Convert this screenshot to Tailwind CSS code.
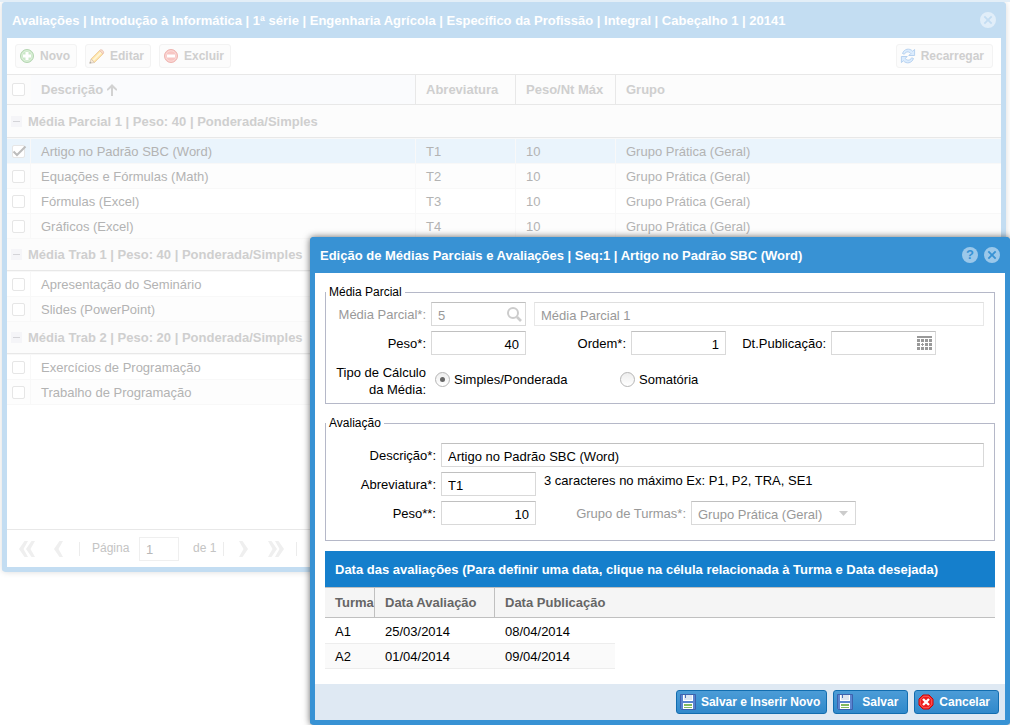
<!DOCTYPE html>
<html lang="pt-BR">
<head>
<meta charset="utf-8">
<meta name="viewport" content="width=device-width, initial-scale=1">
<title>Avaliações</title>
<script src="https://cdn.jsdelivr.net/npm/@tailwindcss/browser@4"></script>
</head>
<body class="bg-white text-[13px] leading-[17px] text-black font-['Liberation_Sans',Arial,sans-serif]">
<svg class="hidden" aria-hidden="true">
  <symbol id="close" viewBox="0 0 16 16"><path fill-rule="evenodd" fill="currentColor" d="M8 0a8 8 0 1 0 0 16A8 8 0 0 0 8 0ZM5 3.700 8 6.700l3-3 1.300 1.300-3 3 3 3-1.300 1.300-3-3-3 3L3.700 11l3-3-3-3Z"/></symbol>
  <symbol id="minus" viewBox="0 0 11 11"><path fill="#f5f5f8" d="M0 0h11v11H0z"/><path fill="#d4d4d8" d="M2 5h7v1H2z"/></symbol>
  <symbol id="tick" viewBox="0 0 15 13"><path fill="none" stroke="#bdbdbd" stroke-width="2" d="M1.500 6.500 5 10l8.500-8.500"/></symbol>
  <symbol id="chev" viewBox="0 0 9 16"><path fill="currentColor" d="M9 0H5.500L0 8l5.500 8H9L4.500 8z"/></symbol>
  <symbol id="disk" viewBox="0 0 16 16">
    <path fill="#5b84cf" stroke="#3c62ad" d="M.5.5h15v15h-14l-1-1z"/><path fill="#fff" d="M3 1h10v6H3z"/><path fill="#dbe4f0" d="M4 1h8v5H4z"/><path fill="#4a6fb5" d="M5 1h1v3H5z"/>
    <path fill="#fff" d="M3 9h10v6H3z"/><path fill="#83b95f" d="M4 10h8v2H4zm0 3h8v1H4z"/>
  </symbol>
</svg>

<main class="relative min-h-screen overflow-hidden border-t-2 border-[#e3eef7]">

  <!-- Lista de avaliações (desabilitada pela janela modal) -->
  <section class="absolute top-0 left-0.5 right-1 rounded-[4px] border-[5px] border-t-0 border-[#c3ddf2] bg-white shadow-[0_0_6px_rgba(0,0,0,0.15)]">
    <header class="-mx-[5px] flex h-9 items-center justify-between rounded-t-[4px] bg-[#c3ddf2] pl-2.5 pr-2.5 text-white">
      <h1 class="font-bold whitespace-nowrap">Avaliações | Introdução à Informática | 1ª série | Engenharia Agrícola | Específico da Profissão | Integral | Cabeçalho 1 | 20141</h1>
      <button type="button" aria-label="Fechar" class="size-4 text-[#e1eef9]"><svg class="size-4"><use href="#close"/></svg></button>
    </header>

    <div class="flex h-9 items-center gap-2 px-2 text-[#cfcfcf]">
      <button type="button" class="flex h-6 items-center gap-[5px] rounded-[3px] border border-[#f3f3f3] bg-[#fcfcfc] pr-1.5 pl-[3px] text-[12px] font-bold">
        <svg class="size-4" viewBox="0 0 16 16"><circle cx="8" cy="8" r="6.500" fill="#cbe8c8" stroke="#b5d6b2"/><circle cx="8" cy="8" r="5.200" fill="none" stroke="#dff1dc"/><path fill="#fff" d="M6.500 4h3v2.500H12v3H9.500V12h-3V9.500H4v-3h2.500z"/></svg>Novo</button>
      <button type="button" class="flex h-6 items-center gap-[5px] rounded-[3px] border border-[#f3f3f3] bg-[#fcfcfc] pr-1.5 pl-[3px] text-[12px] font-bold">
        <svg class="size-4" viewBox="0 0 16 16"><path fill="#fde3a4" stroke="#ecc99a" stroke-width=".8" d="M2 11 10.500 2.500l3.500 3.500-8.500 8.500z"/><path fill="#fff4d4" d="m3.500 11.500 8-8 1.500 1.500-8 8z"/><path fill="#f9dcc9" stroke="#e9bfae" stroke-width=".8" d="M10.500 2.500C12 .2 16.300 3.500 14 6z"/><path fill="#f7ead9" stroke="#d8c8b4" stroke-width=".8" d="M.8 15.200 2 11l3.500 3.500z"/><path fill="#aaa" d="m.5 15.500.6-2 1.400 1.400z"/></svg>Editar</button>
      <button type="button" class="flex h-6 items-center gap-[5px] rounded-[3px] border border-[#f3f3f3] bg-[#fcfcfc] pr-1.5 pl-[3px] text-[12px] font-bold">
        <svg class="size-4" viewBox="0 0 16 16"><circle cx="8" cy="8" r="6.500" fill="#f8c6c3" stroke="#eeb5b1"/><circle cx="8" cy="8" r="5.200" fill="none" stroke="#fbdad8"/><path fill="#fff" d="M4 6.500h8v3H4z"/></svg>Excluir</button>
      <button type="button" class="ml-auto flex h-6 items-center gap-[5px] rounded-[3px] border border-[#f3f3f3] bg-[#fcfcfc] pr-2 pl-[3px] text-[12px] font-bold">
        <svg class="size-4" viewBox="0 0 16 16"><g fill="#dcecfd" stroke="#a9c9ec" stroke-width=".8" stroke-linejoin="round"><path id="seta" d="M2.500 5.500C4 .8 9.500-.3 12.600 3.200L14.600 1.500V7.500H8.800l2-2C9 3.300 6 3.200 4.300 6.200z"/><use href="#seta" transform="rotate(180 8 8)"/></g></svg>Recarregar</button>
    </div>

    <table class="w-full table-fixed border-separate border-spacing-0 text-left text-[#b3b3b3] [&_td]:border-b [&_td]:border-r [&_td]:border-[#f8f8f8] [&_td]:px-2.5 [&_td]:py-0 [&_td:first-child]:pl-[5px] [&_td:first-child]:pr-0 [&_td:last-child]:border-r-0">
      <colgroup><col class="w-6"><col class="w-[385px]"><col class="w-[100px]"><col class="w-[100px]"><col></colgroup>
      <thead class="text-[#cfcfcf] [&_th]:h-[31px] [&_th]:border-y [&_th]:border-[#e8e8e8] [&_th]:bg-[#fcfcfc] [&_th]:px-2.5 [&_th]:py-0 [&_th]:whitespace-nowrap">
        <tr>
          <th class="pl-[5px]! pr-0!"><input type="checkbox" aria-label="Selecionar todas" class="block size-[13px] appearance-none rounded-[2px] border border-[#e6e6e6] bg-white"></th>
          <th class="border-r bg-[#fafbfd]!"><span class="flex items-center gap-1">Descrição <svg class="h-3 w-2.5" viewBox="0 0 10 12"><path fill="#d2d2d2" d="M5 0 0 5v1.500h1L4 4v8h2V4l3 2.500h1V5z"/></svg></span></th>
          <th class="border-r">Abreviatura</th>
          <th class="border-r">Peso/Nt Máx</th>
          <th>Grupo</th>
        </tr>
      </thead>
      <tbody>
        <tr><th colspan="5" class="h-[33px] border-b border-[#e8e8e8] bg-[#fcfcfc] py-0 pl-1 text-[#cfcfcf]"><button type="button" class="flex items-center gap-1.5 font-bold"><svg class="size-[11px]"><use href="#minus"/></svg>Média Parcial 1 | Peso: 40 | Ponderada/Simples</button></th></tr>
        <tr class="h-[26px] bg-[#eaf4fc] [&>td]:border-t"><td><span class="relative block"><input type="checkbox" checked aria-label="Artigo no Padrão SBC (Word)" class="block size-[13px] appearance-none rounded-[2px] border border-[#e6e6e6] bg-white"><svg class="pointer-events-none absolute top-0 left-0 h-[13px] w-[15px]"><use href="#tick"/></svg></span></td><td>Artigo no Padrão SBC (Word)</td><td>T1</td><td>10</td><td>Grupo Prática (Geral)</td></tr>
        <tr class="h-[25px] bg-[#fdfdfd]"><td><input type="checkbox" aria-label="Equações e Fórmulas (Math)" class="block size-[13px] appearance-none rounded-[2px] border border-[#e6e6e6] bg-white"></td><td>Equações e Fórmulas (Math)</td><td>T2</td><td>10</td><td>Grupo Prática (Geral)</td></tr>
        <tr class="h-[25px]"><td><input type="checkbox" aria-label="Fórmulas (Excel)" class="block size-[13px] appearance-none rounded-[2px] border border-[#e6e6e6] bg-white"></td><td>Fórmulas (Excel)</td><td>T3</td><td>10</td><td>Grupo Prática (Geral)</td></tr>
        <tr class="h-[25px] bg-[#fdfdfd]"><td><input type="checkbox" aria-label="Gráficos (Excel)" class="block size-[13px] appearance-none rounded-[2px] border border-[#e6e6e6] bg-white"></td><td>Gráficos (Excel)</td><td>T4</td><td>10</td><td>Grupo Prática (Geral)</td></tr>
        <tr><th colspan="5" class="h-8 border-b border-[#e8e8e8] bg-[#fcfcfc] py-0 pl-1 text-[#cfcfcf]"><button type="button" class="flex items-center gap-1.5 font-bold"><svg class="size-[11px]"><use href="#minus"/></svg>Média Trab 1 | Peso: 40 | Ponderada/Simples</button></th></tr>
        <tr class="h-[26px] [&>td]:border-t"><td><input type="checkbox" aria-label="Apresentação do Seminário" class="block size-[13px] appearance-none rounded-[2px] border border-[#e6e6e6] bg-white"></td><td>Apresentação do Seminário</td><td></td><td></td><td></td></tr>
        <tr class="h-[25px] bg-[#fdfdfd]"><td><input type="checkbox" aria-label="Slides (PowerPoint)" class="block size-[13px] appearance-none rounded-[2px] border border-[#e6e6e6] bg-white"></td><td>Slides (PowerPoint)</td><td></td><td></td><td></td></tr>
        <tr><th colspan="5" class="h-8 border-b border-[#e8e8e8] bg-[#fcfcfc] py-0 pl-1 text-[#cfcfcf]"><button type="button" class="flex items-center gap-1.5 font-bold"><svg class="size-[11px]"><use href="#minus"/></svg>Média Trab 2 | Peso: 20 | Ponderada/Simples</button></th></tr>
        <tr class="h-[26px] [&>td]:border-t"><td><input type="checkbox" aria-label="Exercícios de Programação" class="block size-[13px] appearance-none rounded-[2px] border border-[#e6e6e6] bg-white"></td><td>Exercícios de Programação</td><td></td><td></td><td></td></tr>
        <tr class="h-[25px] bg-[#fdfdfd]"><td><input type="checkbox" aria-label="Trabalho de Programação" class="block size-[13px] appearance-none rounded-[2px] border border-[#e6e6e6] bg-white"></td><td>Trabalho de Programação</td><td></td><td></td><td></td></tr>
      </tbody>
    </table>

    <nav aria-label="Paginação" class="mt-[124px] flex h-[38px] items-center border-t border-[#e8e8e8] pl-3 text-[12px] text-[#c4c4c4]">
      <button type="button" aria-label="Primeira página" class="flex text-[#efefef]"><svg class="h-4 w-[9px]"><use href="#chev"/></svg><svg class="-ml-0.5 h-4 w-[9px]"><use href="#chev"/></svg></button>
      <button type="button" aria-label="Página anterior" class="ml-[19px] text-[#efefef]"><svg class="h-4 w-[9px]"><use href="#chev"/></svg></button>
      <span class="ml-4 h-3.5 w-px bg-[#ececec]"></span>
      <label for="pagina" class="ml-3 w-[47px]">Página</label>
      <input id="pagina" type="text" value="1" class="h-6 w-10 border border-[#efefef] bg-white px-1.5 pt-0.5 text-[13px] text-[#b8b8b8]">
      <span class="ml-3.5 w-[30px]">de 1</span>
      <span class="h-3.5 w-px bg-[#ececec]"></span>
      <button type="button" aria-label="Próxima página" class="ml-[15px] rotate-180 text-[#efefef]"><svg class="h-4 w-[9px]"><use href="#chev"/></svg></button>
      <button type="button" aria-label="Última página" class="ml-5 flex rotate-180 text-[#efefef]"><svg class="h-4 w-[9px]"><use href="#chev"/></svg><svg class="-ml-0.5 h-4 w-[9px]"><use href="#chev"/></svg></button>
      <span class="ml-3 h-3.5 w-px bg-[#ececec]"></span>
    </nav>
  </section>

  <!-- Janela de edição -->
  <section role="dialog" aria-labelledby="titulo" class="absolute top-[235px] right-0 left-[310px] rounded-[4px] border-[5px] border-t-0 border-[#3892d4] bg-white shadow-[0_0_7px_rgba(0,0,0,0.6)]">
    <header class="-mx-[5px] flex h-9 items-center rounded-t-[4px] bg-[#3892d4] px-2.5 text-white">
      <h2 id="titulo" class="mr-auto font-bold whitespace-nowrap">Edição de Médias Parciais e Avaliações | Seq:1 | Artigo no Padrão SBC (Word)</h2>
      <button type="button" aria-label="Ajuda" class="mr-1.5 flex size-4 items-center justify-center rounded-full bg-[#9bc8ea] text-[13px] leading-4 font-bold text-[#3892d4]">?</button>
      <button type="button" aria-label="Fechar" class="size-4 text-[#9bc8ea]"><svg class="size-4"><use href="#close"/></svg></button>
    </header>

    <form id="edicao" class="px-2.5 pt-[11px] pb-[15px]">
      <fieldset class="border border-[#b5b8c8] pb-[5px]">
        <legend class="px-[3px] text-[12px] leading-4">Média Parcial</legend>
        <div class="mt-0.5 flex pr-2.5">
          <label for="mp" class="w-[105px] shrink-0 pt-1 pr-[5px] text-right text-[#999]">Média Parcial*:</label>
          <div class="relative w-[95px] shrink-0">
            <input id="mp" type="text" value="5" disabled class="h-6 w-full border border-[#d9d9d9] border-t-[#c0c0c0] bg-white px-1.5 pt-0.5 text-[#999]">
            <svg class="absolute top-1 right-1 size-4" viewBox="0 0 16 16" fill="none" stroke="#ccc"><circle cx="7" cy="7" r="5" stroke-width="2"/><path stroke-width="2.600" d="m11 11 4 4"/></svg>
          </div>
          <input type="text" value="Média Parcial 1" disabled aria-label="Nome da média parcial" class="ml-2 h-6 min-w-0 flex-1 border border-[#e8e8e8] border-t-[#dfdfdf] bg-white px-1.5 pt-0.5 text-[#999]">
        </div>
        <div class="mt-[5px] flex">
          <label for="peso" class="w-[105px] pt-1 pr-[5px] text-right">Peso*:</label>
          <input id="peso" type="text" value="40" class="h-6 w-[95px] border border-[#d9d9d9] border-t-[#c0c0c0] bg-white px-1.5 pt-0.5 text-right">
          <label for="ordem" class="w-[105px] pt-1 pr-[5px] text-right">Ordem*:</label>
          <input id="ordem" type="text" value="1" class="h-6 w-[95px] border border-[#d9d9d9] border-t-[#c0c0c0] bg-white px-1.5 pt-0.5 text-right">
          <label for="dt" class="w-[105px] pt-1 pr-[5px] text-right">Dt.Publicação:</label>
          <div class="relative w-[105px]">
            <input id="dt" type="text" class="h-6 w-full border border-[#d9d9d9] border-t-[#c0c0c0] bg-white px-1.5">
            <svg class="absolute top-[5px] right-1 h-3.5 w-[15px]" viewBox="0 0 15 14" fill="#999"><path d="M0 0h15v2H0zM0 3h3v3H0zm4 0h3v3H4zm4 0h3v3H8zm4 0h3v3h-3zM0 7h3v3H0zm8 0h3v3H8zm4 0h3v3h-3zM0 11h3v3H0zm4 0h3v3H4zm4 0h3v3H8zm4 0h3v3h-3zM5 7h1v1h1v1H6v1H5V9H4V8h1z"/></svg>
          </div>
        </div>
        <div role="radiogroup" aria-labelledby="tipo" class="mt-[9px] flex items-start">
          <span id="tipo" class="w-[105px] pr-[5px] text-right">Tipo de Cálculo<br>da Média:</span>
          <label class="mt-[7px] ml-1 flex w-[185px] items-center gap-1"><input type="radio" name="calc" checked class="flex size-[15px] appearance-none items-center justify-center rounded-full border border-[#b5b5b5] bg-linear-to-b from-[#eee] to-white before:size-[5px] before:rounded-full before:bg-[#666]">Simples/Ponderada</label>
          <label class="mt-[7px] flex items-center gap-1"><input type="radio" name="calc" class="size-[15px] appearance-none rounded-full border border-[#b5b5b5] bg-linear-to-b from-[#eee] to-white">Somatória</label>
        </div>
      </fieldset>

      <fieldset class="mt-[11px] border border-[#b5b8c8] pb-[15px]">
        <legend class="px-[3px] text-[12px] leading-4">Avaliação</legend>
        <div class="mt-3 flex pr-2.5">
          <label for="desc" class="w-[115px] shrink-0 pt-1 pr-[5px] text-right">Descrição*:</label>
          <input id="desc" type="text" value="Artigo no Padrão SBC (Word)" class="h-6 min-w-0 flex-1 border border-[#d9d9d9] border-t-[#c0c0c0] bg-white px-1.5 pt-0.5">
        </div>
        <div class="mt-[5px] flex">
          <label for="abrev" class="w-[115px] pt-1 pr-[5px] text-right">Abreviatura*:</label>
          <input id="abrev" type="text" value="T1" class="h-6 w-[95px] border border-[#d9d9d9] border-t-[#c0c0c0] bg-white px-1.5 pt-0.5">
          <span class="ml-2">3 caracteres no máximo Ex: P1, P2, TRA, SE1</span>
        </div>
        <div class="mt-[5px] flex">
          <label for="peso2" class="w-[115px] pt-1 pr-[5px] text-right">Peso**:</label>
          <input id="peso2" type="text" value="10" class="h-6 w-[95px] border border-[#d9d9d9] border-t-[#c0c0c0] bg-white px-1.5 pt-0.5 text-right">
          <label for="grupo" class="w-[155px] pt-1 pr-[5px] text-right text-[#999]">Grupo de Turmas*:</label>
          <div class="relative w-[165px]">
            <select id="grupo" disabled class="h-6 w-full appearance-none border border-[#d9d9d9] border-t-[#c0c0c0] bg-white px-1.5 pt-0.5 text-[#999] opacity-100"><option>Grupo Prática (Geral)</option></select>
            <svg class="pointer-events-none absolute top-2.5 right-2 h-[5px] w-[9px]" viewBox="0 0 9 5"><path fill="#ccc" d="M0 0h9L4.500 5z"/></svg>
          </div>
        </div>
      </fieldset>

      <h3 class="mt-2.5 flex h-9 items-center bg-[#157fcc] px-2.5 font-bold whitespace-nowrap text-white">Data das avaliações (Para definir uma data, clique na célula relacionada à Turma e Data desejada)</h3>
      <table class="w-full table-fixed border-separate border-spacing-0 text-left [&_td]:border-b [&_td]:border-[#ededed] [&_td]:px-2.5 [&_td]:py-0 [&_td:last-child]:border-0">
        <colgroup><col class="w-[50px]"><col class="w-[120px]"><col class="w-[120px]"><col></colgroup>
        <thead class="text-[#666] [&_th]:h-[31px] [&_th]:border-y [&_th]:border-[#c0c0c0] [&_th]:bg-[#f5f5f5] [&_th]:py-0 [&_th]:pl-2.5 [&_th]:whitespace-nowrap">
          <tr><th class="overflow-hidden border-r">Turma</th><th class="border-r">Data Avaliação</th><th>Data Publicação</th><th></th></tr>
        </thead>
        <tbody>
          <tr class="h-[26px] [&>td]:border-t [&>td]:border-t-white"><td>A1</td><td>25/03/2014</td><td>08/04/2014</td><td></td></tr>
          <tr class="h-[25px] [&_td:not(:last-child)]:bg-[#fafafa]"><td>A2</td><td>01/04/2014</td><td>09/04/2014</td><td></td></tr>
        </tbody>
      </table>
    </form>

    <footer class="flex h-9 items-center justify-end gap-1.5 bg-[#dfe9f3] px-1.5 text-[12px] font-bold text-white">
      <button type="submit" form="edicao" class="flex h-6 items-center gap-[5px] rounded-[3px] border border-[#126daf] bg-linear-to-b from-[#4b9cd7] to-[#3089cb] pr-1.5 pl-[3px]"><svg class="size-4"><use href="#disk"/></svg>Salvar e Inserir Novo</button>
      <button type="submit" form="edicao" class="flex h-6 w-[75px] items-center rounded-[3px] border border-[#126daf] bg-linear-to-b from-[#4b9cd7] to-[#3089cb] pl-[3px]"><svg class="size-4"><use href="#disk"/></svg><span class="flex-1 text-center">Salvar</span></button>
      <button type="button" class="flex h-6 items-center gap-[5px] rounded-[3px] border border-[#126daf] bg-linear-to-b from-[#4b9cd7] to-[#3089cb] pr-2 pl-[3px]"><svg class="size-4" viewBox="0 0 16 16"><path fill="#ee1c1c" stroke="#c00" d="M5 1h6l4 4v6l-4 4H5l-4-4V5z"/><path fill="none" stroke="#f77" stroke-width=".8" d="M5.500 2.200h5l3.300 3.300v5l-3.300 3.300h-5l-3.300-3.300v-5z"/><path stroke="#fff" stroke-width="2.400" d="m5 5 6 6m0-6-6 6"/></svg>Cancelar</button>
    </footer>
  </section>
</main>
</body>
</html>
